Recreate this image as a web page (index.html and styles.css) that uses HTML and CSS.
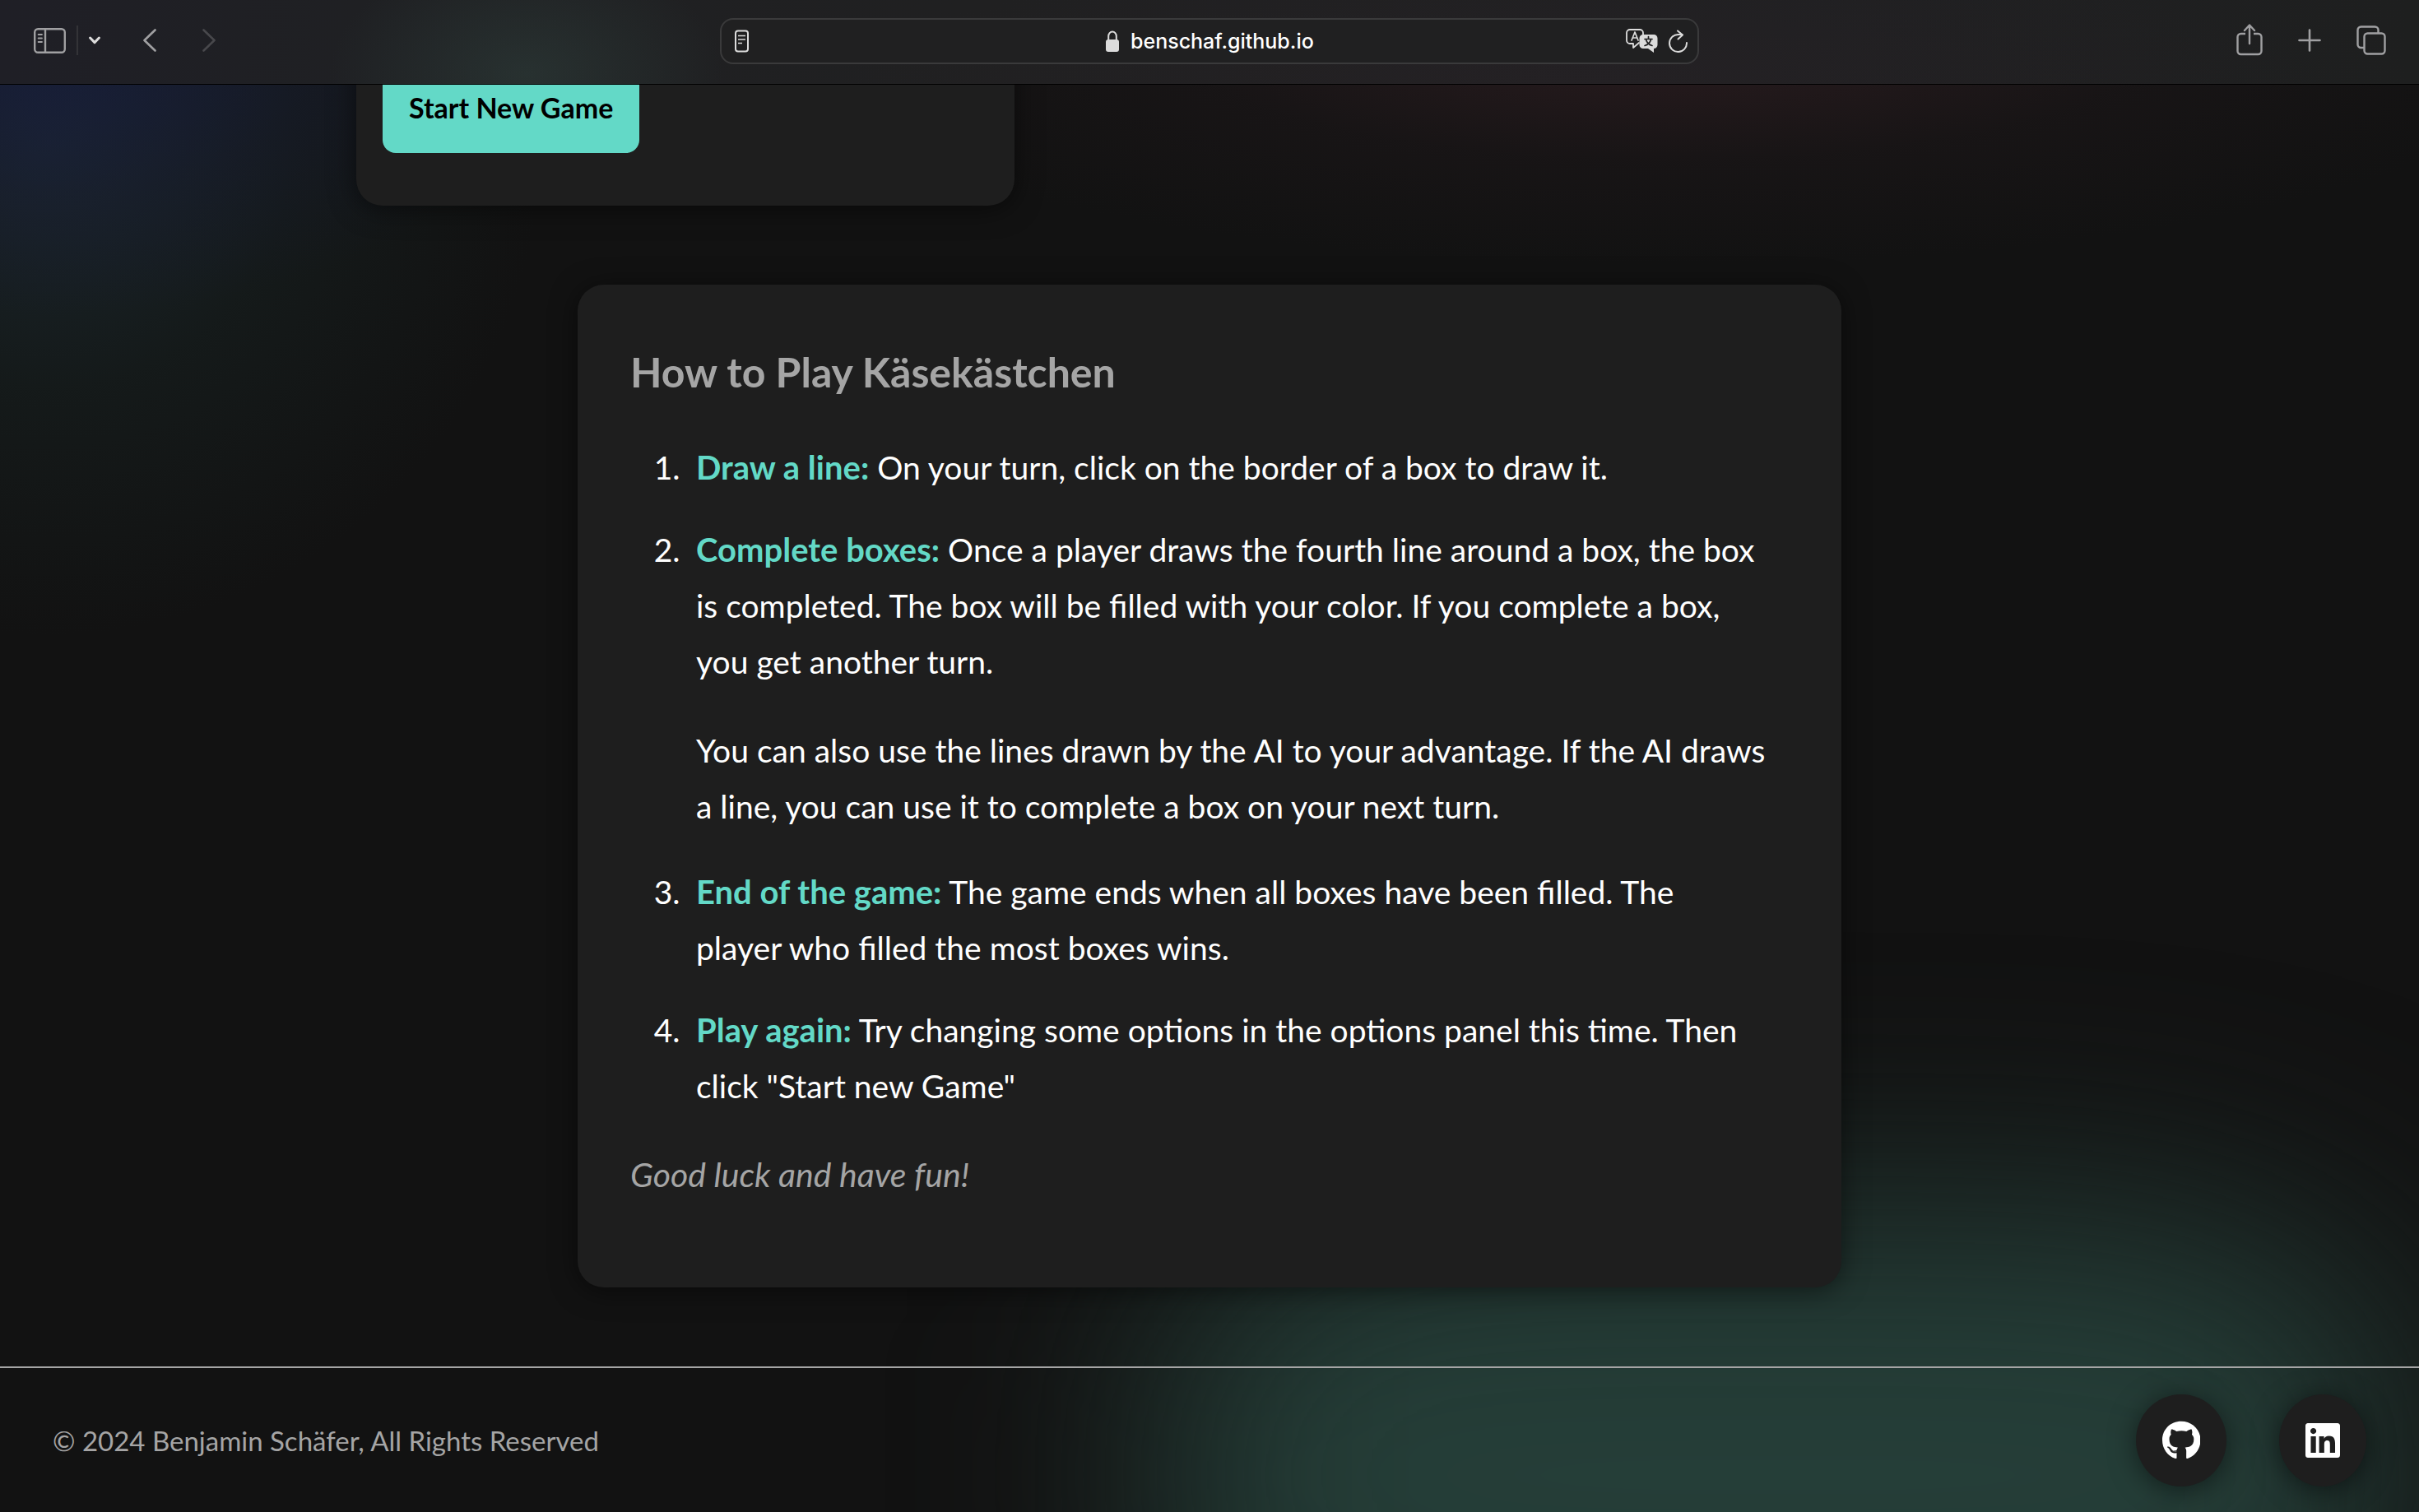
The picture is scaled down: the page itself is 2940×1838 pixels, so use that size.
FILE: index.html
```html
<!DOCTYPE html>
<html lang="en">
<head>
<meta charset="utf-8">
<meta name="viewport" content="width=device-width, initial-scale=1">
<title>Käsekästchen</title>
<link rel="stylesheet" href="styles.css">
</head>
<body>
<header class="toolbar">
  <div class="tools tools-left">
    <div class="tool-group">
      <button class="tool" type="button" aria-label="Show sidebar">
        <svg width="40" height="32" viewBox="0 0 40 32" fill="none" stroke="currentColor" stroke-width="2.4"><rect x="2.2" y="2.2" width="36.6" height="28.6" rx="4"/><path d="M15 2v29"/><path d="M6.6 9h4.4M6.6 13.5h4.4M6.6 18h4.4" stroke-width="1.8" stroke-linecap="round"/></svg>
      </button>
      <span class="divider"></span>
      <button class="tool tool-bright" type="button" aria-label="Tab groups">
        <svg width="14" height="10" viewBox="0 0 14 10" fill="none" stroke="currentColor" stroke-width="3" stroke-linecap="round" stroke-linejoin="round"><path d="M1.6 2 7 7.6 12.4 2"/></svg>
      </button>
    </div>
    <div class="tool-group tool-nav">
      <button class="tool" type="button" aria-label="Back">
        <svg width="16" height="28" viewBox="0 0 16 28" fill="none" stroke="currentColor" stroke-width="2.6" stroke-linecap="round" stroke-linejoin="round"><path d="M14.5 1.5 1.5 14l13 12.5"/></svg>
      </button>
      <button class="tool" type="button" aria-label="Forward" disabled>
        <svg width="16" height="28" viewBox="0 0 16 28" fill="none" stroke="currentColor" stroke-width="2.6" stroke-linecap="round" stroke-linejoin="round"><path d="M1.5 1.5 14.5 14l-13 12.5"/></svg>
      </button>
    </div>
  </div>
  <div class="address">
    <button class="tool tool-bright" type="button" aria-label="Reader view">
      <svg width="22" height="28" viewBox="0 0 22 28" fill="none" stroke="currentColor" stroke-width="2"><rect x="3" y="1.5" width="15" height="25" rx="3"/><path d="M6 7.5h9M6 12h9M6 16.5h5" stroke-width="1.7"/></svg>
    </button>
    <div class="address-site">
      <svg width="18" height="26" viewBox="0 0 18 26" fill="currentColor"><rect x="1" y="11" width="16" height="15" rx="3"/><path d="M4.200 12V7a4.800 5.500 0 0 1 9.600 0v5" fill="none" stroke="currentColor" stroke-width="2"/></svg>
      <input class="address-input" type="text" value="benschaf.github.io" aria-label="Address">
    </div>
    <div class="address-actions">
      <button class="tool tool-bright" type="button" aria-label="Translate">
        <svg width="40" height="30" viewBox="0 0 40 30" fill="none" stroke="currentColor" stroke-linecap="round" stroke-linejoin="round"><path d="M16 17l-7 6v-5H5a4 4 0 0 1-4-4V5a4 4 0 0 1 4-4h12a4 4 0 0 1 4 4v2" stroke-width="1.8"/><path d="M7 14l4-10 4 10M8.500 11h5" stroke-width="1.7"/><path d="M21 7h13a4.500 4.500 0 0 1 4.500 4.500v8A4.500 4.500 0 0 1 34 24v5l-7-5h-6a4.500 4.500 0 0 1-4.500-4.500v-8A4.500 4.500 0 0 1 21 7z" fill="currentColor" stroke="none"/><path class="translate-glyph" d="M27.500 9.500v2.500M23 12.500h9M24.500 13c1 4 4 6.500 7.500 7.500M30.500 13c-1 4-4 6.500-7.500 7.500" stroke-width="1.7"/></svg>
      </button>
      <button class="tool tool-bright" type="button" aria-label="Reload">
        <svg width="24" height="28" viewBox="0 0 24 28" fill="none" stroke="currentColor" stroke-width="2" stroke-linecap="round" stroke-linejoin="round"><path d="M22 16a10.500 10.500 0 1 1-10.500-10h5"/><path d="M11 1.500 17 6.500l-5.500 5"/></svg>
      </button>
    </div>
  </div>
  <div class="tools tools-right">
    <button class="tool" type="button" aria-label="Share">
      <svg width="32" height="40" viewBox="0 0 32 40" fill="none" stroke="currentColor" stroke-width="2.4" stroke-linecap="round" stroke-linejoin="round"><path d="M11 12H5.500a4 4 0 0 0-4 4v17a4 4 0 0 0 4 4h21a4 4 0 0 0 4-4V16a4 4 0 0 0-4-4H21" stroke-linecap="butt"/><path d="M16 24V2M10 8l6-6.500L22 8"/></svg>
    </button>
    <button class="tool" type="button" aria-label="New tab">
      <svg width="28" height="28" viewBox="0 0 28 28" fill="none" stroke="currentColor" stroke-width="2.6" stroke-linecap="round"><path d="M14 1.500v25M1.500 14h25"/></svg>
    </button>
    <button class="tool" type="button" aria-label="Tab overview">
      <svg width="36" height="36" viewBox="0 0 36 36" fill="none" stroke="currentColor" stroke-width="2.4"><rect x="9.500" y="9.500" width="25" height="25" rx="4"/><path d="M9 27H5.500a4 4 0 0 1-4-4V5.500a4 4 0 0 1 4-4h17a4 4 0 0 1 4 4V9"/></svg>
    </button>
  </div>
</header>

<div class="page">
  <main class="content">
    <section class="options">
      <button class="start" type="button">Start New Game</button>
    </section>
    <article class="rules">
      <h2 class="rules-title">How to Play Käsekästchen</h2>
      <ol class="rules-list">
        <li><strong>Draw a line:</strong> On your turn, click on the border of a box to draw it.</li>
        <li><strong>Complete boxes:</strong> Once a player draws the fourth line around a box, the box is completed. The box will be filled with your color. If you complete a box, you get another turn.
          <p>You can also use the lines drawn by the AI to your advantage. If the AI draws a line, you can use it to complete a box on your next turn.</p>
        </li>
        <li><strong>End of the game:</strong> The game ends when all boxes have been filled. The player who filled the most boxes wins.</li>
        <li><strong>Play again:</strong> Try changing some options in the options panel this time. Then click "Start new Game"</li>
      </ol>
      <p class="rules-end">Good luck and have fun!</p>
    </article>
  </main>
  <footer class="footer">
    <p class="copyright">© 2024 Benjamin Schäfer, All Rights Reserved</p>
    <nav class="social" aria-label="Social links">
      <a class="social-link" href="https://github.com/benschaf" aria-label="GitHub">
        <svg height="48" viewBox="0 0 496 512" fill="currentColor"><path d="M165.900 397.400c0 2-2.300 3.600-5.200 3.600-3.300.3-5.600-1.300-5.600-3.600 0-2 2.300-3.600 5.200-3.600 3-.3 5.600 1.300 5.600 3.600zm-31.100-4.500c-.7 2 1.300 4.300 4.300 4.900 2.600 1 5.600 0 6.200-2s-1.300-4.300-4.300-5.200c-2.600-.7-5.500.3-6.200 2.300zm44.200-1.700c-2.900.7-4.900 2.600-4.600 4.900.3 2 2.900 3.300 5.900 2.600 2.900-.7 4.900-2.600 4.600-4.600-.3-1.900-3-3.200-5.900-2.900zM244.800 8C106.100 8 0 113.300 0 252c0 110.900 69.800 205.800 169.500 239.200 12.800 2.300 17.300-5.600 17.300-12.100 0-6.200-.3-40.400-.3-61.400 0 0-70 15-84.700-29.800 0 0-11.400-29.100-27.800-36.600 0 0-22.900-15.700 1.600-15.400 0 0 24.900 2 38.600 25.800 21.900 38.600 58.600 27.500 72.900 20.900 2.300-16 8.800-27.100 16-33.700-55.900-6.200-112.300-14.300-112.300-110.500 0-27.500 7.600-41.300 23.600-58.900-2.600-6.500-11.100-33.300 2.600-67.900 20.900-6.500 69 27 69 27 20-5.600 41.500-8.500 62.800-8.500s42.800 2.900 62.800 8.500c0 0 48.100-33.600 69-27 13.700 34.700 5.200 61.400 2.600 67.900 16 17.700 25.800 31.500 25.800 58.900 0 96.500-58.900 104.200-114.800 110.500 9.200 7.900 17 22.900 17 46.400 0 33.700-.3 75.400-.3 83.600 0 6.500 4.600 14.400 17.300 12.100C428.200 457.800 496 362.900 496 252 496 113.300 383.500 8 244.800 8z"/></svg>
      </a>
      <a class="social-link" href="https://www.linkedin.com/" aria-label="LinkedIn">
        <svg height="48" viewBox="0 0 448 512" fill="currentColor"><path d="M416 32H31.900C14.300 32 0 46.500 0 64.300v383.400C0 465.500 14.300 480 31.900 480H416c17.600 0 32-14.500 32-32.300V64.300c0-17.800-14.400-32.300-32-32.300zM135.400 416H69V202.200h66.500V416zm-33.200-243c-21.300 0-38.500-17.300-38.500-38.500S80.900 96 102.200 96c21.200 0 38.500 17.300 38.500 38.500 0 21.300-17.200 38.500-38.500 38.500zm282.100 243h-66.400V312c0-24.800-.5-56.700-34.500-56.700-34.600 0-39.900 27-39.900 54.900V416h-66.400V202.200h63.700v29.200h.9c8.900-16.800 30.600-34.500 62.900-34.500 67.200 0 79.700 44.300 79.700 101.900V416z"/></svg>
      </a>
    </nav>
  </footer>
</div>
</body>
</html>
```
FILE: styles.css
```css
:root {
  --page: #121212;
  --surface: #1e1e1e;
  --accent: #63d9c7;
  --muted: #a5a5a5;
  --shadow: 0 4px 32px rgba(0, 0, 0, 0.5);
}

@counter-style rule-number {
  system: extends decimal;
  suffix: ".\2002";
}

* {
  box-sizing: border-box;
}

body {
  margin: 0;
  min-height: 100vh;
  display: flex;
  flex-direction: column;
  background: var(--page);
  color: #fff;
  font-family: Lato, "Noto Sans", sans-serif;
  font-size: 39px;
  line-height: 68px;
}

button {
  font: inherit;
  border: 0;
  cursor: pointer;
}

svg {
  display: block;
}

/* Browser toolbar */

.toolbar {
  position: relative;
  z-index: 1;
  display: grid;
  grid-template-columns: 1fr minmax(0, 1190px) 1fr;
  align-items: center;
  height: 103px;
  padding: 0 40px 2px;
  border-bottom: 1px solid #000;
  background:
    radial-gradient(240px 150px at 640px 90px, rgba(48, 66, 62, 0.5), transparent),
    radial-gradient(900px 160px at 65% 100%, rgba(52, 36, 44, 0.2), transparent),
    linear-gradient(90deg, #1f1f26, #1f2023 15%, #202021 40%, #202022 75%, #1e1f1f);
}

.tools {
  display: flex;
  align-items: center;
  padding-bottom: 2px;
}

.tools-left {
  gap: 52px;
}

.tools-right {
  justify-content: flex-end;
  gap: 43px;
}

.tool-group {
  display: flex;
  align-items: center;
  gap: 13px;
}

.tool-nav {
  gap: 56px;
}

.divider {
  width: 2px;
  height: 36px;
  background: #333337;
}

.tool {
  padding: 0;
  background: none;
  color: #a0a0a2;
}

.tool-bright {
  color: #dcdcdc;
}

.tool:disabled {
  color: #48484c;
}

.address {
  display: grid;
  grid-template-columns: 1fr auto 1fr;
  align-items: center;
  height: 56px;
  padding: 0 11px 0 14px;
  border: 2px solid #3a3a3b;
  border-radius: 16px;
  background: #202021;
}

.address-site {
  display: flex;
  align-items: center;
  gap: 13px;
  color: #dcdcdc;
}

.address-input {
  width: 226px;
  padding: 0;
  border: 0;
  background: none;
  color: #fff;
  font: 500 25px/32px Inter, sans-serif;
}

.address-actions {
  display: flex;
  justify-content: flex-end;
  align-items: center;
  gap: 12px;
}

.translate-glyph {
  stroke: #202021;
}

/* Page */

.page {
  position: relative;
  z-index: 0;
  flex: 1;
  display: flex;
  flex-direction: column;
  overflow: hidden;
  background:
    radial-gradient(600px 320px at 2% -40px, rgba(22, 26, 68, 0.6), rgba(24, 26, 56, 0.3) 55%, transparent),
    radial-gradient(600px 600px at 2% 70px, rgba(32, 50, 62, 0.6), rgba(26, 42, 42, 0.32) 50%, transparent),
    radial-gradient(1100px 280px at 69% -60px, rgba(62, 36, 42, 0.55), rgba(40, 28, 32, 0.25) 55%, transparent);
}

.page::before {
  content: "";
  position: absolute;
  z-index: -1;
  right: 1%;
  bottom: -280px;
  width: 51%;
  height: 650px;
  border-radius: 30%;
  background: #253e38;
  filter: blur(140px);
}

.content {
  flex: 1;
  padding: 0 433px;
}

.options {
  display: flex;
  width: 800px;
  margin-top: -66px;
  padding: 32px 32px 64px;
  border-radius: 32px;
  background: var(--surface);
  box-shadow: var(--shadow);
}

.start {
  padding: 28px 32px 21px;
  border-radius: 16px;
  background: var(--accent);
  color: #000;
  font-size: 34px;
  font-weight: 700;
}

.rules {
  max-width: 1536px;
  margin: 96px auto;
  padding: 64px 64px 63px;
  border-radius: 32px;
  background: var(--surface);
  box-shadow: var(--shadow);
}

.rules-title {
  margin: 8px 0 48px;
  color: var(--muted);
  font-size: 50px;
  font-weight: 700;
  line-height: 68px;
}

.rules-list {
  margin: 0;
  padding-left: 80px;
  list-style: rule-number;
}

.rules-list li {
  margin-bottom: 32px;
  padding-right: 28px;
}

.rules-list strong {
  color: var(--accent);
  font-size: 40px;
  line-height: 40px;
}

.rules-list p {
  margin: 40px 0 36px;
}

.rules-end {
  margin: 40px 0;
  color: var(--muted);
  font-size: 41px;
  font-style: italic;
}

/* Footer */

.footer {
  display: flex;
  align-items: center;
  justify-content: space-between;
  padding: 32px 64px 31px;
  border-top: 2px solid var(--muted);
}

.copyright {
  margin: 0;
  color: var(--muted);
  font-size: 33px;
}

.social {
  display: flex;
  gap: 64px;
}

.social-link {
  padding: 32px;
  border-radius: 50%;
  background: var(--surface);
  box-shadow: var(--shadow);
  color: #fff;
}
```
